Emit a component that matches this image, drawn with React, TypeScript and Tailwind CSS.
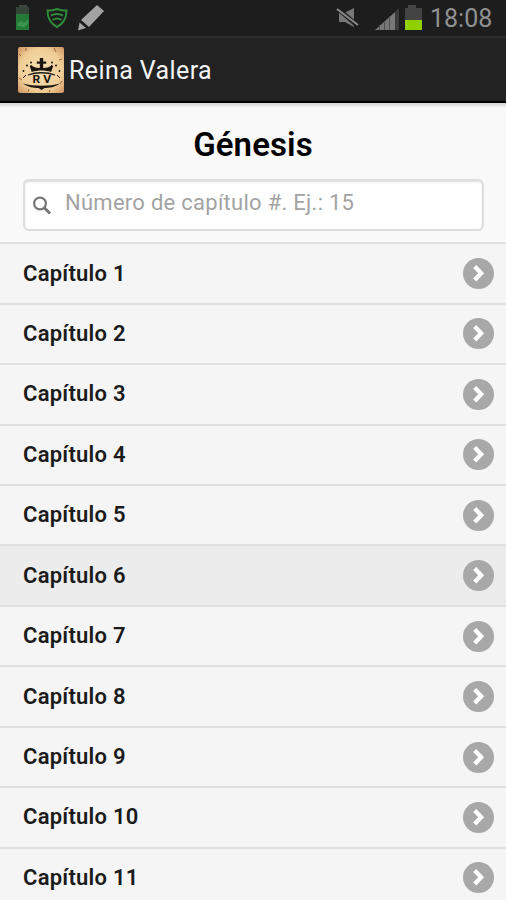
const CHAPTERS = Array.from({ length: 11 }, (_, i) => i + 1);
const ACTIVE_CHAPTER = 6;

function StatusBar() {
  return (
    <div className="flex h-9 shrink-0 items-center justify-between bg-[#1d1d1d] pl-4 pr-[14px]">
      <svg width="92" height="36" viewBox="16 0 92 36" fill="none">
        <rect x="19" y="5" width="8" height="2" fill="#454545" />
        <rect x="16" y="7" width="13" height="8" fill="#344538" />
        <rect x="16" y="14" width="13" height="16" fill="#237b36" />
        <path d="M17 24l4-3 3 2 4-3v4l-4 3-6-1z" fill="#3c9650" />
        <path d="M57 9c3 1 6 2 9.500 1.500 0 8-3 13-9.500 16.500-6.500-3.500-9.500-8.500-9.500-16.500 3.500.5 6.500-.5 9.500-1.500z" stroke="#2f8a3a" strokeWidth="2" />
        <path d="M51 15.500c4-2 8-2 12 0M52.500 20c3-2 6-2 9 0" stroke="#2f8a3a" strokeWidth="2" />
        <path d="M97 5l7 6-15 16-8-7z" fill="#a3a3a3" />
        <path d="M79.500 22.500l6.500 5.500-8 2.500z" fill="#a3a3a3" />
        <path d="M80 20.500l8 7" stroke="#1d1d1d" strokeWidth="1" />
      </svg>
      <div className="flex items-center">
        <svg width="87" height="36" viewBox="336 0 87 36" fill="none">
          <path d="M339 13h5l10-5v19l-9-5h-6z" fill="#777" />
          <path d="M337 8l22 19" stroke="#1d1d1d" strokeWidth="4.500" />
          <path d="M337 9l21 16" stroke="#888" strokeWidth="2.200" />
          <path d="M375 30l20-18v18z" fill="#777" />
          <path d="M379.500 25v5M384.500 21v9M389.500 16v14" stroke="#505050" />
          <path d="M395 12l4-4v22h-4z" fill="#3b3b3b" />
          <path d="M408 5h8v3h6v12h-17V8h3z" fill="#444" />
          <path d="M405 20h17v10h-17z" fill="#8fd000" />
        </svg>
        <span className="ml-[7px] w-[62px] whitespace-nowrap pt-px text-[25px] leading-9 text-[#919191]">18:08</span>
      </div>
    </div>
  );
}

function AppIcon() {
  return (
    <svg width="46" height="46" viewBox="0 0 46 46" className="shrink-0">
      <defs>
        <radialGradient id="parchment" r="0.72">
          <stop offset="0" stopColor="#f7e2b6" />
          <stop offset="0.65" stopColor="#efcc94" />
          <stop offset="1" stopColor="#c98c5a" />
        </radialGradient>
      </defs>
      <rect width="46" height="46" rx="2" fill="url(#parchment)" />
      <path d="M1 7l2 2M8 1v3M36 1l2 4M44 12l-3 1M1 31l3 2M44 34l-2 3M10 45l1-3M31 45l1-2" stroke="#9c633c" />
      <g fill="#1c1713">
        <path d="M21.800 11h3.400v3.500h3v2.200h-3V21c3.500 0 7-1 8.500-3l1.500 1-2 6c-6-2-13.500-2-19.500 0l-2-6 1.500-1c1.500 2 5 3 8.600 3v-4.300h-3v-2.200h3z" />
        <circle cx="13" cy="15.500" r="1" />
        <circle cx="34" cy="15.500" r="1" />
        <circle cx="9" cy="18.500" r="1" />
        <circle cx="38" cy="18.500" r="1" />
        <circle cx="5.500" cy="24" r="0.900" />
        <circle cx="41.500" cy="24" r="0.900" />
        <path d="M5 36.500c10 3 27 3 37 0-5 4-11 4.200-15.500 4.500l-3 2-3-2c-4.500-.3-10.500-.5-15.500-4.500z" />
      </g>
      <path d="M10 28c8-3 19-3 27 0" fill="none" stroke="#1c1713" strokeWidth="1.300" />
      <path d="M8 28l-3 3M39 28l3 3" stroke="#1c1713" strokeWidth="1" />
      <text x="14.500" y="36" fontSize="10.500" fontWeight="700" textLength="18.500" lengthAdjust="spacingAndGlyphs" fill="#1c1713">
        R V
      </text>
    </svg>
  );
}

function SearchIcon() {
  return (
    <svg width="19" height="19" viewBox="0 0 19 19" fill="none" stroke="#747474">
      <circle cx="7" cy="7.500" r="5.900" strokeWidth="2.200" />
      <path d="M11 11.500l6 6" strokeWidth="2.800" />
    </svg>
  );
}

function ChapterRow({ chapter }: { chapter: number }) {
  const background = chapter === ACTIVE_CHAPTER ? 'bg-[#ececec]' : 'bg-[#f5f5f5]';
  return (
    <li className={`flex h-[60.45px] shrink-0 items-center justify-between border-t-2 border-[#e0e0e0] pl-[23px] pr-3 ${background}`}>
      <span className="text-[22px] font-semibold leading-7 tracking-[0.25px] text-[#1b1b1b]">Capítulo {chapter}</span>
      <svg width="31" height="31" viewBox="0 0 31 31" fill="none">
        <circle cx="15.500" cy="15.500" r="15.500" fill="#a8a8a8" />
        <path d="M11.700 8.500l6.500 6.800-6.500 6.800" stroke="#fff" strokeWidth="4.300" />
      </svg>
    </li>
  );
}

export default function App() {
  return (
    <div className="flex h-[900px] w-[506px] flex-col overflow-hidden bg-[#f9f9f9] font-['Roboto','Liberation_Sans',sans-serif]">
      <StatusBar />
      <header className="flex h-[67px] shrink-0 items-center border-b-2 border-black border-t-2 border-t-[#2c2c2c] bg-[#222] pl-[18px]">
        <AppIcon />
        <span className="ml-[5px] pt-[2px] text-[25px] leading-8 tracking-[0.4px] text-[#f3f3f3]">Reina Valera</span>
      </header>
      <div className="h-[5px] shrink-0 bg-gradient-to-b from-[#d2d2d2] to-[#f9f9f9]" />
      <h1 className="mt-[17px] shrink-0 text-center text-[33px] font-semibold leading-10 tracking-[0.1px] text-black">Génesis</h1>
      <div className="ml-[23px] mr-[22px] mt-[14px] flex h-[52px] shrink-0 items-center rounded-md border-2 border-[#dedede] bg-white pl-[8px] shadow-[inset_0_1px_2px_#ddd]">
        <SearchIcon />
        <span className="ml-[13px] pb-[5px] text-[22px] leading-7 tracking-[0.27px] text-[#a3a3a3]">Número de capítulo #. Ej.: 15</span>
      </div>
      <ul className="mt-[11.300px] flex flex-col">
        {CHAPTERS.map((chapter) => (
          <ChapterRow key={chapter} chapter={chapter} />
        ))}
      </ul>
    </div>
  );
}
